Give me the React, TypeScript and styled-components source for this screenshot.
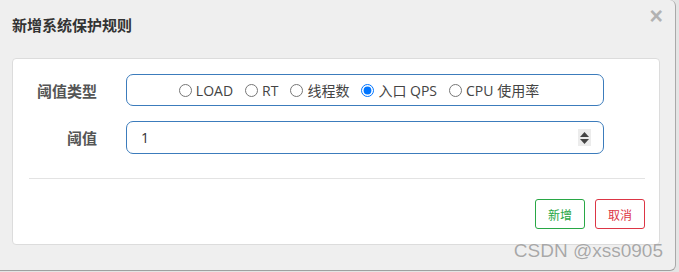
import React, { useState } from 'react';
import styled, { createGlobalStyle } from 'styled-components';

const GlobalStyle = createGlobalStyle`
  html, body {
    margin: 0;
    padding: 0;
    background: #e4e4e4;
    font-family: "Open Sans", "Noto Sans CJK SC", sans-serif;
  }
`;

const Modal = styled.div`
  position: relative;
  box-sizing: border-box;
  width: 676px;
  height: 271px;
  background: #efefef;
  border-right: 1px solid #a9a9a9;
  border-bottom: 1px solid #a0a0a0;
  border-radius: 0 6px 6px 0;
  display: flex;
  flex-direction: column;
`;

const Header = styled.div`
  display: flex;
  justify-content: space-between;
  align-items: flex-start;
  height: 58px;
  box-sizing: border-box;
  padding: 15px 12px 0 12px;
`;

const Title = styled.h4`
  margin: 0;
  font-family: "Noto Sans CJK SC", sans-serif;
  font-size: 15px;
  line-height: 20px;
  font-weight: 700;
  color: #333;
`;

const Close = styled.span`
  margin-top: -12px;
  font-family: "Liberation Sans", sans-serif;
  font-size: 23px;
  font-weight: 700;
  color: #b2b2b2;
  line-height: 26px;
`;

const Panel = styled.div`
  box-sizing: border-box;
  margin: 0 15px 0 12px;
  height: 187px;
  background: #fff;
  border: 1px solid #dcdcdc;
  border-radius: 4px;
  padding: 15px 14px 0 0;
  display: flex;
  flex-direction: column;
`;

const Row = styled.div<{ $mt?: number }>`
  display: flex;
  align-items: center;
  margin-top: ${({ $mt }) => $mt ?? 0}px;
`;

const Label = styled.label`
  width: 84px;
  margin-right: 29px;
  text-align: right;
  font-family: "Noto Sans CJK SC", sans-serif;
  font-size: 15px;
  font-weight: 700;
  color: #555;
`;

const Field = styled.div<{ $h: number }>`
  box-sizing: border-box;
  width: 478px;
  height: ${({ $h }) => $h}px;
  border: 1px solid #3c7cbc;
  border-radius: 7px;
  display: flex;
  align-items: center;
`;

const RadioGroup = styled(Field)`
  justify-content: center;
  gap: 12px;
  padding-right: 12px;
`;

const Option = styled.label`
  display: flex;
  align-items: center;
  gap: 4px;
  font-size: 14px;
  color: #444;
  font-family: "Open Sans", "Noto Sans CJK SC", sans-serif;
`;

const Radio = styled.input`
  margin: 0;
  width: 13px;
  height: 13px;
`;

const NumberField = styled(Field)`
  justify-content: space-between;
  padding: 0 12px 0 14px;
  font-size: 14px;
  color: #333;
`;

const Spinner = styled.div`
  width: 13px;
  height: 17px;
  background: #ececec;
  display: flex;
  flex-direction: column;
  align-items: center;
  justify-content: center;
  gap: 2px;
`;

const Divider = styled.hr`
  border: 0;
  border-top: 1px solid #e3e3e3;
  margin: 24px 0 0 16px;
`;

const Footer = styled.div`
  display: flex;
  justify-content: flex-end;
  gap: 10px;
  margin-top: 20px;
`;

const Button = styled.button<{ $color: string }>`
  box-sizing: border-box;
  width: 50px;
  height: 30px;
  padding: 0;
  background: #fff;
  border: 1px solid ${({ $color }) => $color};
  border-radius: 3px;
  color: ${({ $color }) => $color};
  font-family: "Noto Sans CJK SC", sans-serif;
  font-size: 12px;
`;

const Watermark = styled.div`
  position: absolute;
  right: 12px;
  bottom: 8px;
  font-family: "Liberation Sans", sans-serif;
  font-size: 19px;
  color: #a8a8a8;
  text-shadow: 0 0 1px #fff;
`;

const options = ['LOAD', 'RT', '线程数', '入口 QPS', 'CPU 使用率'];

export default function App() {
  const [grade, setGrade] = useState(3);

  return (
    <>
      <GlobalStyle />
      <Modal>
        <Header>
          <Title>新增系统保护规则</Title>
          <Close>×</Close>
        </Header>
        <Panel>
          <Row>
            <Label>阈值类型</Label>
            <RadioGroup $h={32}>
              {options.map((o, i) => (
                <Option key={o}>
                  <Radio type="radio" name="grade" checked={grade === i} onChange={() => setGrade(i)} />
                  {o}
                </Option>
              ))}
            </RadioGroup>
          </Row>
          <Row $mt={15}>
            <Label>阈值</Label>
            <NumberField $h={33}>
              <span>1</span>
              <Spinner>
                <svg width="9" height="5" viewBox="0 0 9 5"><path d="M4.5 0 L9 5 L0 5 Z" fill="#444" /></svg>
                <svg width="9" height="5" viewBox="0 0 9 5"><path d="M0 0 L9 0 L4.5 5 Z" fill="#444" /></svg>
              </Spinner>
            </NumberField>
          </Row>
          <Divider />
          <Footer>
            <Button $color="#28a745">新增</Button>
            <Button $color="#dc3545">取消</Button>
          </Footer>
        </Panel>
        <Watermark>CSDN @xss0905</Watermark>
      </Modal>
    </>
  );
}
